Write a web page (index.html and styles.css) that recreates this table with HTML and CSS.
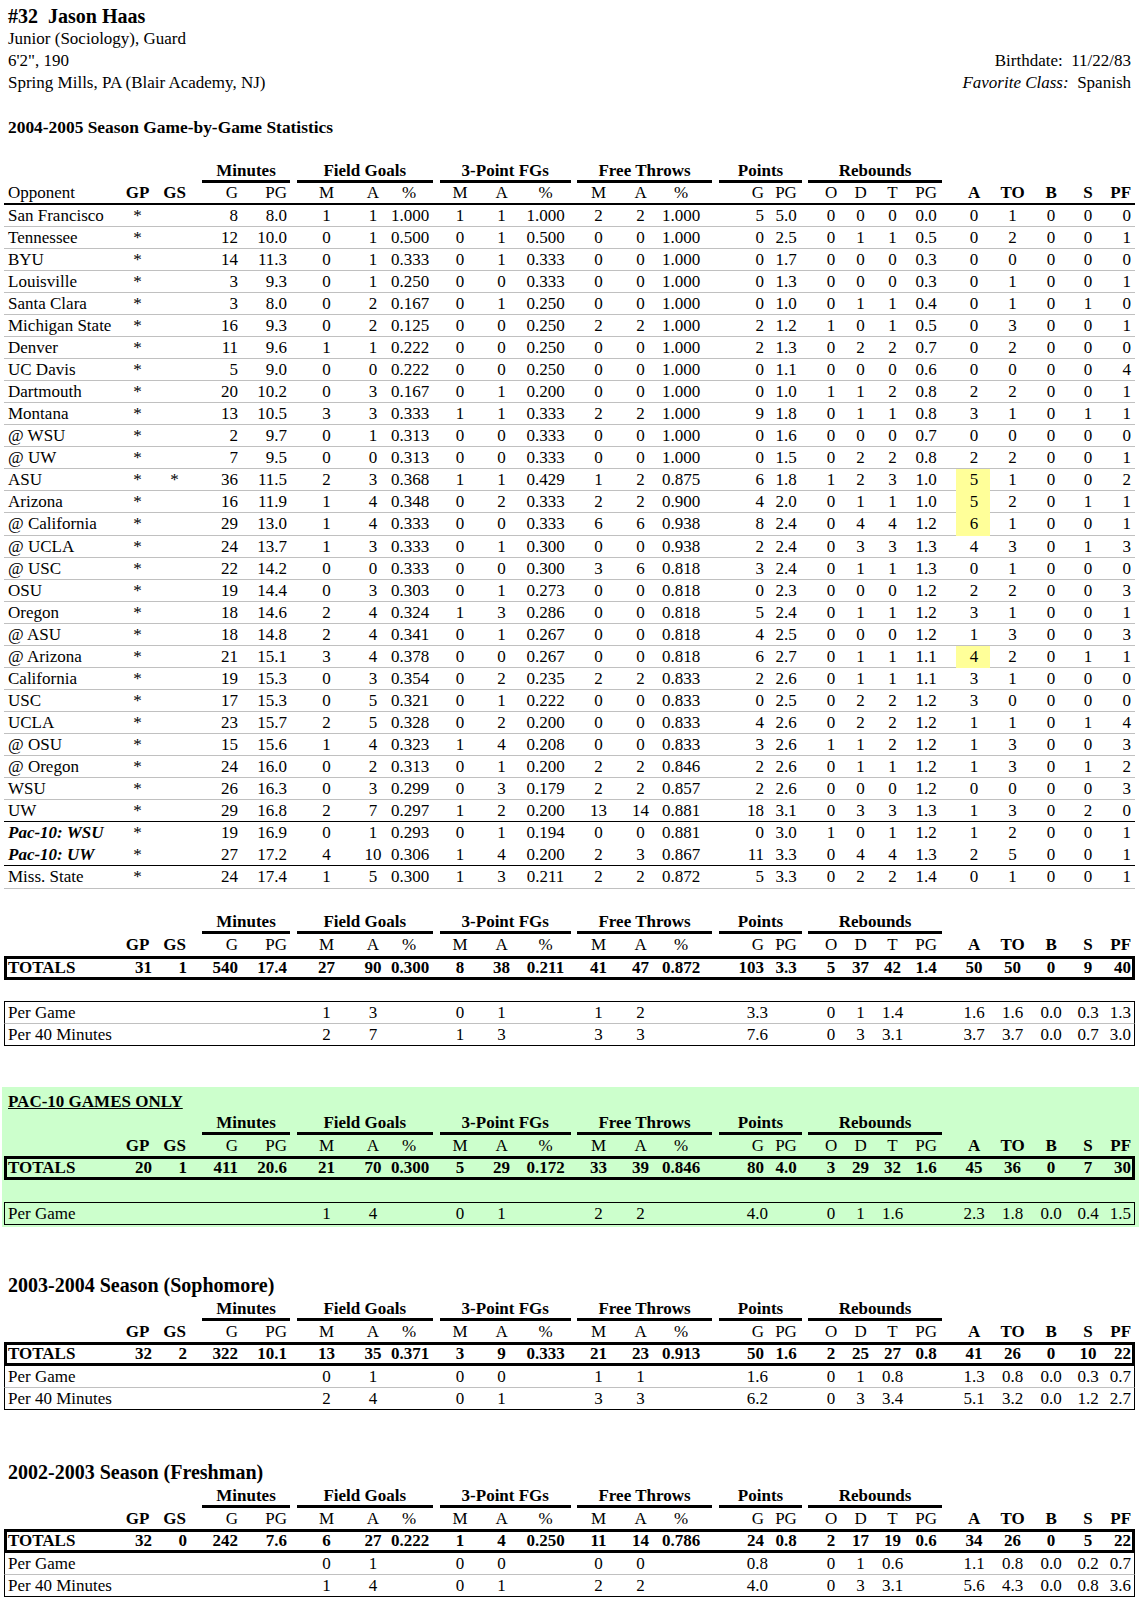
FILE: index.html
```html
<!DOCTYPE html>
<html lang="en">
<head>
<meta charset="utf-8">
<title>#32 Jason Haas</title>
<link rel="stylesheet" href="styles.css">
</head>
<body>
<div class="page">
  <header class="bio">
    <div class="bio-left">
      <div class="name">#32&nbsp; Jason Haas</div>
      <div class="line">Junior (Sociology), Guard</div>
      <div class="line">6'2", 190</div>
      <div class="line">Spring Mills, PA (Blair Academy, NJ)</div>
    </div>
    <div class="bio-right">
      <div class="line">Birthdate:&nbsp; 11/22/83</div>
      <div class="line"><i>Favorite Class:</i>&nbsp; Spanish</div>
    </div>
  </header>

  <h2 class="lead-title">2004-2005 Season Game-by-Game Statistics</h2>

  <table class="stats games">
    <colgroup><col><col><col><col><col><col><col><col><col><col><col><col><col><col><col><col><col><col><col><col><col><col><col><col><col></colgroup>
    <thead>
      <tr class="grp"><th colspan="3"></th><th colspan="2"><div class="gl g-min">Minutes</div></th><th colspan="3"><div class="gl g-fg">Field Goals</div></th><th colspan="3"><div class="gl g-3p">3-Point FGs</div></th><th colspan="3"><div class="gl g-ft">Free Throws</div></th><th colspan="2"><div class="gl g-pts">Points</div></th><th colspan="4"><div class="gl g-reb">Rebounds</div></th><th colspan="5"></th></tr>
      <tr class="cols"><th>Opponent</th><th class="key">GP</th><th class="key">GS</th><th>G</th><th>PG</th><th>M</th><th>A</th><th>%</th><th>M</th><th>A</th><th>%</th><th>M</th><th>A</th><th>%</th><th>G</th><th>PG</th><th>O</th><th>D</th><th>T</th><th>PG</th><th class="key">A</th><th class="key">TO</th><th class="key">B</th><th class="key">S</th><th class="key">PF</th></tr>
    </thead>
    <tbody>
      <tr><td>San Francisco</td><td>*</td><td></td><td>8</td><td>8.0</td><td>1</td><td>1</td><td>1.000</td><td>1</td><td>1</td><td>1.000</td><td>2</td><td>2</td><td>1.000</td><td>5</td><td>5.0</td><td>0</td><td>0</td><td>0</td><td>0.0</td><td>0</td><td>1</td><td>0</td><td>0</td><td>0</td></tr>
      <tr><td>Tennessee</td><td>*</td><td></td><td>12</td><td>10.0</td><td>0</td><td>1</td><td>0.500</td><td>0</td><td>1</td><td>0.500</td><td>0</td><td>0</td><td>1.000</td><td>0</td><td>2.5</td><td>0</td><td>1</td><td>1</td><td>0.5</td><td>0</td><td>2</td><td>0</td><td>0</td><td>1</td></tr>
      <tr><td>BYU</td><td>*</td><td></td><td>14</td><td>11.3</td><td>0</td><td>1</td><td>0.333</td><td>0</td><td>1</td><td>0.333</td><td>0</td><td>0</td><td>1.000</td><td>0</td><td>1.7</td><td>0</td><td>0</td><td>0</td><td>0.3</td><td>0</td><td>0</td><td>0</td><td>0</td><td>0</td></tr>
      <tr><td>Louisville</td><td>*</td><td></td><td>3</td><td>9.3</td><td>0</td><td>1</td><td>0.250</td><td>0</td><td>0</td><td>0.333</td><td>0</td><td>0</td><td>1.000</td><td>0</td><td>1.3</td><td>0</td><td>0</td><td>0</td><td>0.3</td><td>0</td><td>1</td><td>0</td><td>0</td><td>1</td></tr>
      <tr><td>Santa Clara</td><td>*</td><td></td><td>3</td><td>8.0</td><td>0</td><td>2</td><td>0.167</td><td>0</td><td>1</td><td>0.250</td><td>0</td><td>0</td><td>1.000</td><td>0</td><td>1.0</td><td>0</td><td>1</td><td>1</td><td>0.4</td><td>0</td><td>1</td><td>0</td><td>1</td><td>0</td></tr>
      <tr><td>Michigan State</td><td>*</td><td></td><td>16</td><td>9.3</td><td>0</td><td>2</td><td>0.125</td><td>0</td><td>0</td><td>0.250</td><td>2</td><td>2</td><td>1.000</td><td>2</td><td>1.2</td><td>1</td><td>0</td><td>1</td><td>0.5</td><td>0</td><td>3</td><td>0</td><td>0</td><td>1</td></tr>
      <tr><td>Denver</td><td>*</td><td></td><td>11</td><td>9.6</td><td>1</td><td>1</td><td>0.222</td><td>0</td><td>0</td><td>0.250</td><td>0</td><td>0</td><td>1.000</td><td>2</td><td>1.3</td><td>0</td><td>2</td><td>2</td><td>0.7</td><td>0</td><td>2</td><td>0</td><td>0</td><td>0</td></tr>
      <tr><td>UC Davis</td><td>*</td><td></td><td>5</td><td>9.0</td><td>0</td><td>0</td><td>0.222</td><td>0</td><td>0</td><td>0.250</td><td>0</td><td>0</td><td>1.000</td><td>0</td><td>1.1</td><td>0</td><td>0</td><td>0</td><td>0.6</td><td>0</td><td>0</td><td>0</td><td>0</td><td>4</td></tr>
      <tr><td>Dartmouth</td><td>*</td><td></td><td>20</td><td>10.2</td><td>0</td><td>3</td><td>0.167</td><td>0</td><td>1</td><td>0.200</td><td>0</td><td>0</td><td>1.000</td><td>0</td><td>1.0</td><td>1</td><td>1</td><td>2</td><td>0.8</td><td>2</td><td>2</td><td>0</td><td>0</td><td>1</td></tr>
      <tr><td>Montana</td><td>*</td><td></td><td>13</td><td>10.5</td><td>3</td><td>3</td><td>0.333</td><td>1</td><td>1</td><td>0.333</td><td>2</td><td>2</td><td>1.000</td><td>9</td><td>1.8</td><td>0</td><td>1</td><td>1</td><td>0.8</td><td>3</td><td>1</td><td>0</td><td>1</td><td>1</td></tr>
      <tr><td>@ WSU</td><td>*</td><td></td><td>2</td><td>9.7</td><td>0</td><td>1</td><td>0.313</td><td>0</td><td>0</td><td>0.333</td><td>0</td><td>0</td><td>1.000</td><td>0</td><td>1.6</td><td>0</td><td>0</td><td>0</td><td>0.7</td><td>0</td><td>0</td><td>0</td><td>0</td><td>0</td></tr>
      <tr><td>@ UW</td><td>*</td><td></td><td>7</td><td>9.5</td><td>0</td><td>0</td><td>0.313</td><td>0</td><td>0</td><td>0.333</td><td>0</td><td>0</td><td>1.000</td><td>0</td><td>1.5</td><td>0</td><td>2</td><td>2</td><td>0.8</td><td>2</td><td>2</td><td>0</td><td>0</td><td>1</td></tr>
      <tr><td>ASU</td><td>*</td><td>*</td><td>36</td><td>11.5</td><td>2</td><td>3</td><td>0.368</td><td>1</td><td>1</td><td>0.429</td><td>1</td><td>2</td><td>0.875</td><td>6</td><td>1.8</td><td>1</td><td>2</td><td>3</td><td>1.0</td><td class="hl">5</td><td>1</td><td>0</td><td>0</td><td>2</td></tr>
      <tr><td>Arizona</td><td>*</td><td></td><td>16</td><td>11.9</td><td>1</td><td>4</td><td>0.348</td><td>0</td><td>2</td><td>0.333</td><td>2</td><td>2</td><td>0.900</td><td>4</td><td>2.0</td><td>0</td><td>1</td><td>1</td><td>1.0</td><td class="hl">5</td><td>2</td><td>0</td><td>1</td><td>1</td></tr>
      <tr><td>@ California</td><td>*</td><td></td><td>29</td><td>13.0</td><td>1</td><td>4</td><td>0.333</td><td>0</td><td>0</td><td>0.333</td><td>6</td><td>6</td><td>0.938</td><td>8</td><td>2.4</td><td>0</td><td>4</td><td>4</td><td>1.2</td><td class="hl">6</td><td>1</td><td>0</td><td>0</td><td>1</td></tr>
      <tr><td>@ UCLA</td><td>*</td><td></td><td>24</td><td>13.7</td><td>1</td><td>3</td><td>0.333</td><td>0</td><td>1</td><td>0.300</td><td>0</td><td>0</td><td>0.938</td><td>2</td><td>2.4</td><td>0</td><td>3</td><td>3</td><td>1.3</td><td>4</td><td>3</td><td>0</td><td>1</td><td>3</td></tr>
      <tr><td>@ USC</td><td>*</td><td></td><td>22</td><td>14.2</td><td>0</td><td>0</td><td>0.333</td><td>0</td><td>0</td><td>0.300</td><td>3</td><td>6</td><td>0.818</td><td>3</td><td>2.4</td><td>0</td><td>1</td><td>1</td><td>1.3</td><td>0</td><td>1</td><td>0</td><td>0</td><td>0</td></tr>
      <tr><td>OSU</td><td>*</td><td></td><td>19</td><td>14.4</td><td>0</td><td>3</td><td>0.303</td><td>0</td><td>1</td><td>0.273</td><td>0</td><td>0</td><td>0.818</td><td>0</td><td>2.3</td><td>0</td><td>0</td><td>0</td><td>1.2</td><td>2</td><td>2</td><td>0</td><td>0</td><td>3</td></tr>
      <tr><td>Oregon</td><td>*</td><td></td><td>18</td><td>14.6</td><td>2</td><td>4</td><td>0.324</td><td>1</td><td>3</td><td>0.286</td><td>0</td><td>0</td><td>0.818</td><td>5</td><td>2.4</td><td>0</td><td>1</td><td>1</td><td>1.2</td><td>3</td><td>1</td><td>0</td><td>0</td><td>1</td></tr>
      <tr><td>@ ASU</td><td>*</td><td></td><td>18</td><td>14.8</td><td>2</td><td>4</td><td>0.341</td><td>0</td><td>1</td><td>0.267</td><td>0</td><td>0</td><td>0.818</td><td>4</td><td>2.5</td><td>0</td><td>0</td><td>0</td><td>1.2</td><td>1</td><td>3</td><td>0</td><td>0</td><td>3</td></tr>
      <tr><td>@ Arizona</td><td>*</td><td></td><td>21</td><td>15.1</td><td>3</td><td>4</td><td>0.378</td><td>0</td><td>0</td><td>0.267</td><td>0</td><td>0</td><td>0.818</td><td>6</td><td>2.7</td><td>0</td><td>1</td><td>1</td><td>1.1</td><td class="hl">4</td><td>2</td><td>0</td><td>1</td><td>1</td></tr>
      <tr><td>California</td><td>*</td><td></td><td>19</td><td>15.3</td><td>0</td><td>3</td><td>0.354</td><td>0</td><td>2</td><td>0.235</td><td>2</td><td>2</td><td>0.833</td><td>2</td><td>2.6</td><td>0</td><td>1</td><td>1</td><td>1.1</td><td>3</td><td>1</td><td>0</td><td>0</td><td>0</td></tr>
      <tr><td>USC</td><td>*</td><td></td><td>17</td><td>15.3</td><td>0</td><td>5</td><td>0.321</td><td>0</td><td>1</td><td>0.222</td><td>0</td><td>0</td><td>0.833</td><td>0</td><td>2.5</td><td>0</td><td>2</td><td>2</td><td>1.2</td><td>3</td><td>0</td><td>0</td><td>0</td><td>0</td></tr>
      <tr><td>UCLA</td><td>*</td><td></td><td>23</td><td>15.7</td><td>2</td><td>5</td><td>0.328</td><td>0</td><td>2</td><td>0.200</td><td>0</td><td>0</td><td>0.833</td><td>4</td><td>2.6</td><td>0</td><td>2</td><td>2</td><td>1.2</td><td>1</td><td>1</td><td>0</td><td>1</td><td>4</td></tr>
      <tr><td>@ OSU</td><td>*</td><td></td><td>15</td><td>15.6</td><td>1</td><td>4</td><td>0.323</td><td>1</td><td>4</td><td>0.208</td><td>0</td><td>0</td><td>0.833</td><td>3</td><td>2.6</td><td>1</td><td>1</td><td>2</td><td>1.2</td><td>1</td><td>3</td><td>0</td><td>0</td><td>3</td></tr>
      <tr><td>@ Oregon</td><td>*</td><td></td><td>24</td><td>16.0</td><td>0</td><td>2</td><td>0.313</td><td>0</td><td>1</td><td>0.200</td><td>2</td><td>2</td><td>0.846</td><td>2</td><td>2.6</td><td>0</td><td>1</td><td>1</td><td>1.2</td><td>1</td><td>3</td><td>0</td><td>1</td><td>2</td></tr>
      <tr><td>WSU</td><td>*</td><td></td><td>26</td><td>16.3</td><td>0</td><td>3</td><td>0.299</td><td>0</td><td>3</td><td>0.179</td><td>2</td><td>2</td><td>0.857</td><td>2</td><td>2.6</td><td>0</td><td>0</td><td>0</td><td>1.2</td><td>0</td><td>0</td><td>0</td><td>0</td><td>3</td></tr>
      <tr class="before-tourney"><td>UW</td><td>*</td><td></td><td>29</td><td>16.8</td><td>2</td><td>7</td><td>0.297</td><td>1</td><td>2</td><td>0.200</td><td>13</td><td>14</td><td>0.881</td><td>18</td><td>3.1</td><td>0</td><td>3</td><td>3</td><td>1.3</td><td>1</td><td>3</td><td>0</td><td>2</td><td>0</td></tr>
      <tr class="tourney first"><td>Pac-10: WSU</td><td>*</td><td></td><td>19</td><td>16.9</td><td>0</td><td>1</td><td>0.293</td><td>0</td><td>1</td><td>0.194</td><td>0</td><td>0</td><td>0.881</td><td>0</td><td>3.0</td><td>1</td><td>0</td><td>1</td><td>1.2</td><td>1</td><td>2</td><td>0</td><td>0</td><td>1</td></tr>
      <tr class="tourney last"><td>Pac-10: UW</td><td>*</td><td></td><td>27</td><td>17.2</td><td>4</td><td>10</td><td>0.306</td><td>1</td><td>4</td><td>0.200</td><td>2</td><td>3</td><td>0.867</td><td>11</td><td>3.3</td><td>0</td><td>4</td><td>4</td><td>1.3</td><td>2</td><td>5</td><td>0</td><td>0</td><td>1</td></tr>
      <tr><td>Miss. State</td><td>*</td><td></td><td>24</td><td>17.4</td><td>1</td><td>5</td><td>0.300</td><td>1</td><td>3</td><td>0.211</td><td>2</td><td>2</td><td>0.872</td><td>5</td><td>3.3</td><td>0</td><td>2</td><td>2</td><td>1.4</td><td>0</td><td>1</td><td>0</td><td>0</td><td>1</td></tr>
    </tbody>
  </table>

  <table class="stats summary after-games">
    <colgroup><col><col><col><col><col><col><col><col><col><col><col><col><col><col><col><col><col><col><col><col><col><col><col><col><col></colgroup>
    <thead>
      <tr class="grp"><th colspan="3"></th><th colspan="2"><div class="gl g-min">Minutes</div></th><th colspan="3"><div class="gl g-fg">Field Goals</div></th><th colspan="3"><div class="gl g-3p">3-Point FGs</div></th><th colspan="3"><div class="gl g-ft">Free Throws</div></th><th colspan="2"><div class="gl g-pts">Points</div></th><th colspan="4"><div class="gl g-reb">Rebounds</div></th><th colspan="5"></th></tr>
      <tr class="cols plain"><th></th><th class="key">GP</th><th class="key">GS</th><th>G</th><th>PG</th><th>M</th><th>A</th><th>%</th><th>M</th><th>A</th><th>%</th><th>M</th><th>A</th><th>%</th><th>G</th><th>PG</th><th>O</th><th>D</th><th>T</th><th>PG</th><th class="key">A</th><th class="key">TO</th><th class="key">B</th><th class="key">S</th><th class="key">PF</th></tr>
    </thead>
    <tbody>
      <tr class="totals"><td>TOTALS</td><td>31</td><td>1</td><td>540</td><td>17.4</td><td>27</td><td>90</td><td>0.300</td><td>8</td><td>38</td><td>0.211</td><td>41</td><td>47</td><td>0.872</td><td>103</td><td>3.3</td><td>5</td><td>37</td><td>42</td><td>1.4</td><td>50</td><td>50</td><td>0</td><td>9</td><td>40</td></tr>
    </tbody>
  </table>

  <table class="stats per boxed">
    <colgroup><col><col><col><col><col><col><col><col><col><col><col><col><col><col><col><col><col><col><col><col><col><col><col><col><col></colgroup>
    <tbody>
      <tr class="per-row"><td>Per Game</td><td></td><td></td><td></td><td></td><td>1</td><td>3</td><td></td><td>0</td><td>1</td><td></td><td>1</td><td>2</td><td></td><td>3.3</td><td></td><td>0</td><td>1</td><td>1.4</td><td></td><td>1.6</td><td>1.6</td><td>0.0</td><td>0.3</td><td>1.3</td></tr>
      <tr class="per-row"><td>Per 40 Minutes</td><td></td><td></td><td></td><td></td><td>2</td><td>7</td><td></td><td>1</td><td>3</td><td></td><td>3</td><td>3</td><td></td><td>7.6</td><td></td><td>0</td><td>3</td><td>3.1</td><td></td><td>3.7</td><td>3.7</td><td>0.0</td><td>0.7</td><td>3.0</td></tr>
    </tbody>
  </table>

  <section class="pac">
    <h3 class="pac-title">PAC-10 GAMES ONLY</h3>
    <table class="stats summary">
      <colgroup><col><col><col><col><col><col><col><col><col><col><col><col><col><col><col><col><col><col><col><col><col><col><col><col><col></colgroup>
      <thead>
        <tr class="grp"><th colspan="3"></th><th colspan="2"><div class="gl g-min">Minutes</div></th><th colspan="3"><div class="gl g-fg">Field Goals</div></th><th colspan="3"><div class="gl g-3p">3-Point FGs</div></th><th colspan="3"><div class="gl g-ft">Free Throws</div></th><th colspan="2"><div class="gl g-pts">Points</div></th><th colspan="4"><div class="gl g-reb">Rebounds</div></th><th colspan="5"></th></tr>
        <tr class="cols plain"><th></th><th class="key">GP</th><th class="key">GS</th><th>G</th><th>PG</th><th>M</th><th>A</th><th>%</th><th>M</th><th>A</th><th>%</th><th>M</th><th>A</th><th>%</th><th>G</th><th>PG</th><th>O</th><th>D</th><th>T</th><th>PG</th><th class="key">A</th><th class="key">TO</th><th class="key">B</th><th class="key">S</th><th class="key">PF</th></tr>
      </thead>
      <tbody>
        <tr class="totals"><td>TOTALS</td><td>20</td><td>1</td><td>411</td><td>20.6</td><td>21</td><td>70</td><td>0.300</td><td>5</td><td>29</td><td>0.172</td><td>33</td><td>39</td><td>0.846</td><td>80</td><td>4.0</td><td>3</td><td>29</td><td>32</td><td>1.6</td><td>45</td><td>36</td><td>0</td><td>7</td><td>30</td></tr>
      </tbody>
    </table>
    <table class="stats per boxed">
      <colgroup><col><col><col><col><col><col><col><col><col><col><col><col><col><col><col><col><col><col><col><col><col><col><col><col><col></colgroup>
      <tbody>
        <tr class="per-row"><td>Per Game</td><td></td><td></td><td></td><td></td><td>1</td><td>4</td><td></td><td>0</td><td>1</td><td></td><td>2</td><td>2</td><td></td><td>4.0</td><td></td><td>0</td><td>1</td><td>1.6</td><td></td><td>2.3</td><td>1.8</td><td>0.0</td><td>0.4</td><td>1.5</td></tr>
      </tbody>
    </table>
  </section>

  <h2 class="season-title">2003-2004 Season (Sophomore)</h2>
  <table class="stats summary">
    <colgroup><col><col><col><col><col><col><col><col><col><col><col><col><col><col><col><col><col><col><col><col><col><col><col><col><col></colgroup>
    <thead>
      <tr class="grp"><th colspan="3"></th><th colspan="2"><div class="gl g-min">Minutes</div></th><th colspan="3"><div class="gl g-fg">Field Goals</div></th><th colspan="3"><div class="gl g-3p">3-Point FGs</div></th><th colspan="3"><div class="gl g-ft">Free Throws</div></th><th colspan="2"><div class="gl g-pts">Points</div></th><th colspan="4"><div class="gl g-reb">Rebounds</div></th><th colspan="5"></th></tr>
      <tr class="cols plain"><th></th><th class="key">GP</th><th class="key">GS</th><th>G</th><th>PG</th><th>M</th><th>A</th><th>%</th><th>M</th><th>A</th><th>%</th><th>M</th><th>A</th><th>%</th><th>G</th><th>PG</th><th>O</th><th>D</th><th>T</th><th>PG</th><th class="key">A</th><th class="key">TO</th><th class="key">B</th><th class="key">S</th><th class="key">PF</th></tr>
    </thead>
    <tbody>
      <tr class="totals"><td>TOTALS</td><td>32</td><td>2</td><td>322</td><td>10.1</td><td>13</td><td>35</td><td>0.371</td><td>3</td><td>9</td><td>0.333</td><td>21</td><td>23</td><td>0.913</td><td>50</td><td>1.6</td><td>2</td><td>25</td><td>27</td><td>0.8</td><td>41</td><td>26</td><td>0</td><td>10</td><td>22</td></tr>
      <tr class="per-row attached"><td>Per Game</td><td></td><td></td><td></td><td></td><td>0</td><td>1</td><td></td><td>0</td><td>0</td><td></td><td>1</td><td>1</td><td></td><td>1.6</td><td></td><td>0</td><td>1</td><td>0.8</td><td></td><td>1.3</td><td>0.8</td><td>0.0</td><td>0.3</td><td>0.7</td></tr>
      <tr class="per-row attached"><td>Per 40 Minutes</td><td></td><td></td><td></td><td></td><td>2</td><td>4</td><td></td><td>0</td><td>1</td><td></td><td>3</td><td>3</td><td></td><td>6.2</td><td></td><td>0</td><td>3</td><td>3.4</td><td></td><td>5.1</td><td>3.2</td><td>0.0</td><td>1.2</td><td>2.7</td></tr>
    </tbody>
  </table>

  <h2 class="season-title later">2002-2003 Season (Freshman)</h2>
  <table class="stats summary">
    <colgroup><col><col><col><col><col><col><col><col><col><col><col><col><col><col><col><col><col><col><col><col><col><col><col><col><col></colgroup>
    <thead>
      <tr class="grp"><th colspan="3"></th><th colspan="2"><div class="gl g-min">Minutes</div></th><th colspan="3"><div class="gl g-fg">Field Goals</div></th><th colspan="3"><div class="gl g-3p">3-Point FGs</div></th><th colspan="3"><div class="gl g-ft">Free Throws</div></th><th colspan="2"><div class="gl g-pts">Points</div></th><th colspan="4"><div class="gl g-reb">Rebounds</div></th><th colspan="5"></th></tr>
      <tr class="cols plain"><th></th><th class="key">GP</th><th class="key">GS</th><th>G</th><th>PG</th><th>M</th><th>A</th><th>%</th><th>M</th><th>A</th><th>%</th><th>M</th><th>A</th><th>%</th><th>G</th><th>PG</th><th>O</th><th>D</th><th>T</th><th>PG</th><th class="key">A</th><th class="key">TO</th><th class="key">B</th><th class="key">S</th><th class="key">PF</th></tr>
    </thead>
    <tbody>
      <tr class="totals"><td>TOTALS</td><td>32</td><td>0</td><td>242</td><td>7.6</td><td>6</td><td>27</td><td>0.222</td><td>1</td><td>4</td><td>0.250</td><td>11</td><td>14</td><td>0.786</td><td>24</td><td>0.8</td><td>2</td><td>17</td><td>19</td><td>0.6</td><td>34</td><td>26</td><td>0</td><td>5</td><td>22</td></tr>
      <tr class="per-row attached"><td>Per Game</td><td></td><td></td><td></td><td></td><td>0</td><td>1</td><td></td><td>0</td><td>0</td><td></td><td>0</td><td>0</td><td></td><td>0.8</td><td></td><td>0</td><td>1</td><td>0.6</td><td></td><td>1.1</td><td>0.8</td><td>0.0</td><td>0.2</td><td>0.7</td></tr>
      <tr class="per-row attached"><td>Per 40 Minutes</td><td></td><td></td><td></td><td></td><td>1</td><td>4</td><td></td><td>0</td><td>1</td><td></td><td>2</td><td>2</td><td></td><td>4.0</td><td></td><td>0</td><td>3</td><td>3.1</td><td></td><td>5.6</td><td>4.3</td><td>0.0</td><td>0.8</td><td>3.6</td></tr>
    </tbody>
  </table>
</div>
</body>
</html>
```

FILE: styles.css
```css
html, body {
  margin: 0;
  padding: 0;
  background: #ffffff;
}

body {
  font-family: "Liberation Serif", "Times New Roman", serif;
  font-size: 17px;
  color: #000000;
}

.page {
  padding: 3.5px 4px 0 4px;
}

/* ---------- Bio ---------- */
.bio {
  display: flex;
  justify-content: space-between;
  align-items: flex-end;
}

.bio-left,
.bio-right {
  padding: 0 4px;
}

.bio-right {
  text-align: right;
}

.name {
  font-size: 20px;
  font-weight: bold;
  line-height: 24px;
}

.line {
  line-height: 22px;
}

/* ---------- Titles ---------- */
.lead-title {
  margin: 22.5px 0 22.6px;
  padding-left: 4px;
  font-size: 17.4px;
  line-height: 22px;
  font-weight: bold;
}

.season-title {
  margin: 45px 0 0;
  padding-left: 4px;
  font-size: 20px;
  line-height: 27px;
  font-weight: bold;
}

.season-title.later {
  margin-top: 48.6px;
}

/* ---------- Tables ---------- */
.stats {
  width: 100%;
  table-layout: fixed;
  border-collapse: separate;
  border-spacing: 0;
  font-size: 17px;
}

.stats col:nth-child(1)  { width: 113px; }
.stats col:nth-child(2)  { width: 40px; }
.stats col:nth-child(3)  { width: 35px; }
.stats col:nth-child(4)  { width: 52px; }
.stats col:nth-child(5)  { width: 49px; }
.stats col:nth-child(6)  { width: 57px; }
.stats col:nth-child(7)  { width: 41px; }
.stats col:nth-child(8)  { width: 45px; }
.stats col:nth-child(9)  { width: 45px; }
.stats col:nth-child(10) { width: 43px; }
.stats col:nth-child(11) { width: 50px; }
.stats col:nth-child(12) { width: 46px; }
.stats col:nth-child(13) { width: 41px; }
.stats col:nth-child(14) { width: 55px; }
.stats col:nth-child(15) { width: 54px; }
.stats col:nth-child(16) { width: 35px; }
.stats col:nth-child(17) { width: 41px; }
.stats col:nth-child(18) { width: 30px; }
.stats col:nth-child(19) { width: 33px; }
.stats col:nth-child(20) { width: 47px; }
.stats col:nth-child(21) { width: 34px; }
.stats col:nth-child(22) { width: 42px; }
.stats col:nth-child(23) { width: 38px; }
.stats col:nth-child(24) { width: 36px; }
.stats col:nth-child(25) { width: 29px; }

.stats th,
.stats td {
  padding: 0;
  font-weight: normal;
  text-align: center;
  white-space: nowrap;
  line-height: 21px;
}

/* column alignment (all rows except group header rows) */
.stats tr:not(.grp) > :nth-child(1)  { text-align: left; padding-left: 4px; }
.stats tr:not(.grp) > :nth-child(2)  { padding-left: 1px; }
.stats tr:not(.grp) > :nth-child(4)  { text-align: right; padding-right: 6px; }
.stats tr:not(.grp) > :nth-child(5)  { text-align: right; padding-right: 6px; }
.stats tr:not(.grp) > :nth-child(6)  { padding-left: 10px; }
.stats tr:not(.grp) > :nth-child(7)  { padding-left: 5px; }
.stats tr:not(.grp) > :nth-child(8)  { padding-right: 9px; }
.stats tr:not(.grp) > :nth-child(9)  { padding-left: 3px; }
.stats tr:not(.grp) > :nth-child(10) { padding-right: 2px; }
.stats tr:not(.grp) > :nth-child(11) { padding-right: 7px; }
.stats tr:not(.grp) > :nth-child(12) { padding-left: 3px; }
.stats tr:not(.grp) > :nth-child(14) { padding-right: 15px; }
.stats tr:not(.grp) > :nth-child(15) { text-align: right; padding-right: 6px; }
.stats tr:not(.grp) > :nth-child(16) { padding-right: 3px; }
.stats tr:not(.grp) > :nth-child(17) { padding-left: 11px; }
.stats tr:not(.grp) > :nth-child(18) { padding-right: 1px; }
.stats tr:not(.grp) > :nth-child(20) { padding-right: 13px; }
.stats tr:not(.grp) > :nth-child(21) { padding-left: 2px; }
.stats tr:not(.grp) > :nth-child(22) { padding-left: 3px; }
.stats tr:not(.grp) > :nth-child(25) { text-align: right; padding-right: 4px; }

/* group header row */
.grp th {
  line-height: 19px;
  font-weight: bold;
}

.gl {
  border-bottom: 3px solid #000;
  font-weight: bold;
}

.g-min { margin: 0 3px 0 10px; }
.g-fg  { margin: 0 3.5px 0 4px; }
.g-3p  { margin: 0 3px 0 3.5px; }
.g-ft  { margin: 0 4px 0 3px; }
.g-pts { margin: 0 3px 0 3px; }
.g-reb { margin: 0 14px 0 3px; }

/* column header row */
.cols th {
  line-height: 20px;
  border-bottom: 2px solid #000;
}

.cols.plain th {
  line-height: 21.5px;
  border-bottom: 0;
}

.cols th.key {
  font-weight: bold;
}

/* game rows */
.games tbody td {
  line-height: 21.07px;
  border-bottom: 1px solid #c0c0c0;
}

.games tr.before-tourney td,
.games tr.tourney.last td {
  border-bottom-color: #000;
}

.games tr.tourney.first td {
  border-bottom-color: transparent;
}

.games tr.tourney td:first-child {
  font-weight: bold;
  font-style: italic;
}

.games td.hl {
  background: #ffff99;
  border-bottom-color: #ffff99;
}

/* totals rows */
.after-games {
  margin-top: 23.5px;
}

.totals td {
  font-weight: bold;
  line-height: 18px;
  border-top: 3px solid #000;
  border-bottom: 3px solid #000;
}

.stats tr.totals > td:nth-child(1) {
  border-left: 3px solid #000;
  padding-left: 1px;
}

.stats tr.totals > td:nth-child(2),
.stats tr.totals > td:nth-child(3) {
  text-align: right;
  padding-left: 0;
  padding-right: 5px;
}

.stats tr.totals > td:nth-child(25) {
  border-right: 3px solid #000;
  padding-right: 1px;
}

/* per-game rows */
.per {
  margin-top: 21.5px;
}

.per-row td {
  border-bottom: 1px solid #c0c0c0;
}

.boxed .per-row:first-child td {
  border-top: 1px solid #000;
}

.stats .per-row:last-child td {
  border-bottom-color: #000;
}

.stats tr.per-row > td:nth-child(1) {
  border-left: 1px solid #000;
  padding-left: 3px;
}

.stats tr.per-row > td:nth-child(15) {
  padding-right: 2px;
}

.stats tr.per-row > td:nth-child(25) {
  border-right: 1px solid #000;
  padding-right: 3px;
}

/* Pac-10 block */
.pac {
  margin: 41px -4px 0 -2px;
  padding: 2.6px 4px 2px 2px;
  background: #ccffcc;
}

.pac-title {
  margin: 0;
  padding-left: 4px;
  font-size: 17px;
  line-height: 23px;
  font-weight: bold;
  text-decoration: underline;
}
```
